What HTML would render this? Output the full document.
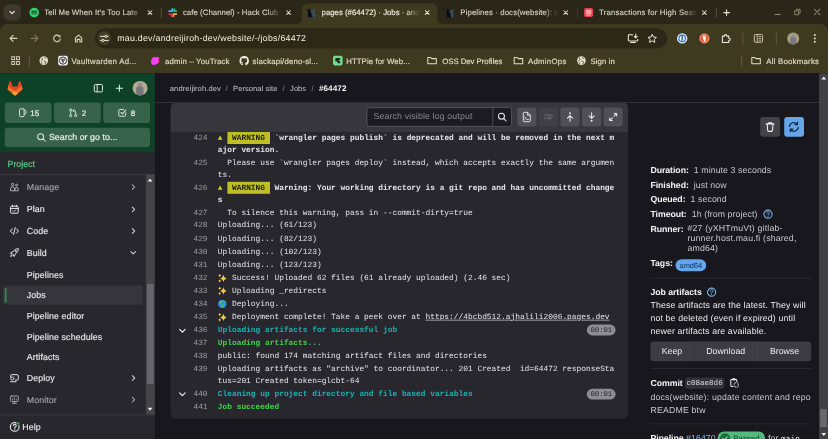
<!DOCTYPE html>
<html lang="en">
<head>
<meta charset="utf-8">
<title>pages (#64472) · Jobs</title>
<style>
html,body{margin:0;padding:0;background:#18171d;}
body{width:828px;height:439px;overflow:hidden;position:relative;}
#root{position:absolute;left:0;top:0;width:1380px;height:732px;transform:scale(.6);transform-origin:0 0;overflow:hidden;
  font-family:"Liberation Sans",sans-serif;color:#ececef;background:#18171d;text-rendering:geometricPrecision;}
#root *{box-sizing:border-box;}
.abs{position:absolute;}
svg{display:block;overflow:visible;}

/* ---------- browser chrome ---------- */
#tabstrip{position:absolute;left:0;top:0;width:1380px;height:60px;background:#2b2718;}
#toolbar{position:absolute;left:0;top:39.5px;width:1380px;height:50px;background:#3e3a20;border-radius:13px 13px 0 0;}
#bookmarks{position:absolute;left:0;top:85px;width:1380px;height:37px;background:#3e3a20;}
.tab{position:absolute;top:5.5px;height:34px;width:231.2px;}
.tab .fav{position:absolute;left:11px;top:7.6px;width:16px;height:16px;}
.tab .title{position:absolute;left:36px;top:6.6px;width:164px;height:18px;line-height:18px;font-size:13px;color:#d9d4c0;-webkit-text-stroke:.2px currentColor;white-space:nowrap;overflow:hidden;
  -webkit-mask-image:linear-gradient(90deg,#000 0,#000 140px,transparent 164px);mask-image:linear-gradient(90deg,#000 0,#000 140px,transparent 164px);}
.tab .x{position:absolute;left:205px;top:8.7px;width:14px;height:14px;}
.tab.active .bg{position:absolute;left:3px;top:0;width:225.6px;height:34px;background:#3e3a20;border-radius:9px 9px 0 0;}
.tab.active .title{color:#f3f0e4;}
.tab.active .bg:before,.tab.active .bg:after{content:"";position:absolute;bottom:0;width:8px;height:8px;}
.tab.active .bg:before{left:-8px;background:radial-gradient(circle at 0 0,transparent 7.7px,#3e3a20 8.3px);}
.tab.active .bg:after{right:-8px;background:radial-gradient(circle at 100% 0,transparent 7.7px,#3e3a20 8.3px);}
.tabsep{position:absolute;top:12px;width:1.6px;height:18px;background:#4d4833;border-radius:1px;}
.bk{position:absolute;top:7.9px;height:20px;line-height:20px;font-size:13px;color:#e4dfca;-webkit-text-stroke:.2px currentColor;white-space:nowrap;}
.bki{position:absolute;top:8.2px;width:16px;height:16px;}
.tsep{position:absolute;width:1.6px;background:#5b563a;border-radius:1px;}

/* ---------- page ---------- */
#page{position:absolute;left:0;top:122px;width:1380px;height:610px;background:#18171d;overflow:hidden;}
</style>
</head>
<body>
<div id="root">

<!-- ================= TAB STRIP ================= -->
<div id="tabstrip">
  <div class="abs" style="left:6.4px;top:6.5px;width:28.4px;height:27.5px;border-radius:9px;background:#3d3a2d;">
    <svg width="28.4" height="27.5" viewBox="0 0 28 28"><path d="M10.3 12.4 L14 16 L17.7 12.4" fill="none" stroke="#ece8d8" stroke-width="2" stroke-linecap="round" stroke-linejoin="round"/></svg>
  </div>

  <div class="tab" style="left:37.6px;">
    <svg class="fav" viewBox="0 0 16 16"><circle cx="8" cy="8" r="8" fill="#2fd566"/><rect x="3.2" y="4.6" width="9.6" height="6.6" rx="1.2" fill="#2f7d4a"/><rect x="3.6" y="5.4" width="8.8" height="1.3" fill="#1b5a33"/></svg>
    <div class="title"><span id="t1" style="letter-spacing:0.173px;">Tell Me When It’s Too Late</span></div>
    <svg class="x" viewBox="0 0 14 14"><path d="M3.9 3.9 L10.1 10.1 M10.1 3.9 L3.9 10.1" stroke="#e6e1cf" stroke-width="1.7" stroke-linecap="round"/></svg>
  </div>
  <div class="tabsep" style="left:268px;"></div>

  <div class="tab" style="left:268.8px;">
    <svg class="fav" viewBox="0 0 16 16">
      <rect x="5.6" y="0.6" width="3" height="6.4" rx="1.5" fill="#36c5f0"/><rect x="0.6" y="5.6" width="6.4" height="3" rx="1.5" transform="translate(0,-1.6)" fill="#36c5f0"/>
      <rect x="9" y="0.6" width="3" height="6.4" rx="1.5" transform="translate(0,0)" fill="#2eb67d"/><rect x="9" y="4" width="6.4" height="3" rx="1.5" fill="#2eb67d"/>
      <rect x="7.4" y="9" width="3" height="6.4" rx="1.5" transform="translate(0,0)" fill="#ecb22e"/><rect x="9" y="9" width="6.4" height="3" rx="1.5" fill="#ecb22e"/>
      <rect x="4" y="9" width="3" height="6.4" rx="1.5" transform="translate(0,0)" fill="#e01e5a"/><rect x="0.6" y="9" width="6.4" height="3" rx="1.5" fill="#e01e5a"/>
    </svg>
    <div class="title"><span id="t2" style="letter-spacing:0.085px;">cafe (Channel) - Hack Club</span></div>
    <svg class="x" viewBox="0 0 14 14"><path d="M3.9 3.9 L10.1 10.1 M10.1 3.9 L3.9 10.1" stroke="#e6e1cf" stroke-width="1.7" stroke-linecap="round"/></svg>
  </div>

  <div class="tab active" style="left:500px;"><div class="bg"></div>
    <svg class="fav" viewBox="0 0 16 16"><path d="M7.600 8C8.600 4 11.800 2.300 14.600 3.400C12.600 4.400 12 6 12.600 8C13.600 11 14 13 13 15.600L10.200 15.600C11.400 13 10 10 7.600 8Z" fill="#3b4358" stroke="#1f7f86" stroke-width=".7"/><path d="M.8 .6L3 3L5.400 1.400L6.600 6L10.200 15.600H2L2.400 8Z" fill="#0a0a12" stroke="#2a3042" stroke-width=".5"/></svg>
    <div class="title"><span id="t3" style="letter-spacing:-0.004px;">pages (#64472) · Jobs · andreijiroh</span></div>
    <svg class="x" viewBox="0 0 14 14"><path d="M3.9 3.9 L10.1 10.1 M10.1 3.9 L3.9 10.1" stroke="#f3f0e4" stroke-width="1.7" stroke-linecap="round"/></svg>
  </div>

  <div class="tab" style="left:731.2px;">
    <svg class="fav" viewBox="0 0 16 16"><path d="M7.600 8C8.600 4 11.800 2.300 14.600 3.400C12.600 4.400 12 6 12.600 8C13.600 11 14 13 13 15.600L10.200 15.600C11.400 13 10 10 7.600 8Z" fill="#3b4358" stroke="#1f7f86" stroke-width=".7"/><path d="M.8 .6L3 3L5.400 1.400L6.600 6L10.200 15.600H2L2.400 8Z" fill="#0a0a12" stroke="#2a3042" stroke-width=".5"/></svg>
    <div class="title"><span id="t4" style="letter-spacing:0.184px;">Pipelines · docs(website): update</span></div>
    <svg class="x" viewBox="0 0 14 14"><path d="M3.9 3.9 L10.1 10.1 M10.1 3.9 L3.9 10.1" stroke="#e6e1cf" stroke-width="1.7" stroke-linecap="round"/></svg>
  </div>
  <div class="tabsep" style="left:961.6px;"></div>

  <div class="tab" style="left:962.4px;">
    <svg class="fav" viewBox="0 0 16 16"><rect x="0.5" y="0.5" width="15" height="15" rx="3" fill="#e8434f"/><rect x="3.4" y="3.2" width="9.2" height="8" rx="1.6" fill="#f6a3a8"/><rect x="4.6" y="11.6" width="6.8" height="1.8" rx=".6" fill="#f6a3a8"/></svg>
    <div class="title"><span id="t5" style="letter-spacing:0.296px;">Transactions for High Seas</span></div>
    <svg class="x" viewBox="0 0 14 14"><path d="M3.9 3.9 L10.1 10.1 M10.1 3.9 L3.9 10.1" stroke="#e6e1cf" stroke-width="1.7" stroke-linecap="round"/></svg>
  </div>
  <div class="tabsep" style="left:1193px;"></div>

  <svg class="abs" style="left:1203px;top:12.5px;" width="16" height="16" viewBox="0 0 16 16"><path d="M8 3.4V12.600M3.400 8H12.600" stroke="#f0ecdc" stroke-width="1.800" stroke-linecap="round"/></svg>

  <!-- window controls -->
  <svg class="abs" style="left:1288px;top:12px;" width="16" height="16" viewBox="0 0 16 16"><path d="M3.5 12H12.5" stroke="#8f8a72" stroke-width="1.7" stroke-linecap="round"/></svg>
  <svg class="abs" style="left:1320.6px;top:12px;" width="16" height="16" viewBox="0 0 16 16"><path d="M3.5 6h6.500v6.500h-6.500z M6 5.800V3.500h6.500v6.500h-2.300" fill="none" stroke="#8f8a72" stroke-width="1.5" stroke-linejoin="round"/></svg>
  <svg class="abs" style="left:1353.7px;top:12px;" width="16" height="16" viewBox="0 0 16 16"><path d="M3.600 3.600 L12.400 12.400 M12.400 3.600 L3.600 12.400" stroke="#8f8a72" stroke-width="1.7" stroke-linecap="round"/></svg>
</div>

<!-- ================= TOOLBAR ================= -->
<div id="toolbar"><div class="abs" style="left:0;top:-1.5px;width:1380px;height:50px;">
  <!-- back -->
  <svg class="abs" style="left:13px;top:17px;" width="18" height="18" viewBox="0 0 18 18"><path d="M15 9H4M8.800 4L3.800 9l5 5" fill="none" stroke="#dad5c0" stroke-width="1.8" stroke-linecap="round" stroke-linejoin="round"/></svg>
  <!-- forward (disabled) -->
  <svg class="abs" style="left:49px;top:17px;" width="18" height="18" viewBox="0 0 18 18"><path d="M3 9H14M9.200 4L14.200 9l-5 5" fill="none" stroke="#857f5f" stroke-width="1.8" stroke-linecap="round" stroke-linejoin="round"/></svg>
  <!-- reload -->
  <svg class="abs" style="left:86px;top:17px;" width="18" height="18" viewBox="0 0 18 18"><path d="M14.400 9.600a5.500 5.500 0 1 1-1.600-4.500" fill="none" stroke="#dad5c0" stroke-width="1.800" stroke-linecap="round"/><path d="M14.800 2.800v4.200h-4.200z" fill="#dad5c0"/></svg>
  <!-- home -->
  <svg class="abs" style="left:122px;top:17px;" width="18" height="18" viewBox="0 0 18 18"><path d="M3.800 8.200L9 3.600l5.200 4.600v6.800H11.200v-4.400H6.800v4.400H3.800z" fill="none" stroke="#dad5c0" stroke-width="1.800" stroke-linejoin="round"/></svg>

  <!-- omnibox -->
  <div class="abs" style="left:157.5px;top:9px;width:954px;height:33.5px;border-radius:17px;background:#2c2817;"></div>
  <div class="abs" style="left:162.8px;top:14.4px;width:22.6px;height:22.6px;border-radius:12px;background:#433f26;"></div>
  <svg class="abs" style="left:166px;top:17.7px;" width="16" height="16" viewBox="0 0 16 16"><path d="M1.600 4.600H8.500M12.500 4.600H14.400M1.600 11.400H3.500M7.500 11.400H14.400" stroke="#f0ecdc" stroke-width="1.6" stroke-linecap="round"/><circle cx="10.500" cy="4.600" r="1.900" fill="none" stroke="#f0ecdc" stroke-width="1.500"/><circle cx="5.500" cy="11.400" r="1.900" fill="none" stroke="#f0ecdc" stroke-width="1.500"/></svg>
  <div class="abs" id="url" style="letter-spacing:0.466px;left:195.4px;top:10.6px;height:33.5px;line-height:33.5px;font-size:14.6px;color:#f3f0e4;white-space:nowrap;">mau.dev/andreijiroh-dev/website/-/jobs/64472</div>
  <!-- install -->
  <svg class="abs" style="left:1045px;top:17px;" width="20" height="18" viewBox="0 0 20 18"><path d="M9.500 3H3.200a1 1 0 0 0-1 1v8.200a1 1 0 0 0 1 1H16.800a1 1 0 0 0 1-1V10.500M6 16h8" fill="none" stroke="#f0ecdc" stroke-width="1.700" stroke-linecap="round" stroke-linejoin="round"/><path d="M14.500 1.800v6M11.800 5.400l2.700 2.700 2.700-2.700" fill="none" stroke="#f0ecdc" stroke-width="1.700" stroke-linecap="round" stroke-linejoin="round"/></svg>
  <!-- star -->
  <svg class="abs" style="left:1078px;top:17px;" width="18" height="18" viewBox="0 0 18 18"><path d="M9 2.200l2.100 4.500 4.900.6-3.600 3.400.9 4.900L9 13.200l-4.300 2.400.9-4.900L2 7.300l4.900-.6z" fill="none" stroke="#f0ecdc" stroke-width="1.600" stroke-linejoin="round"/></svg>

  <!-- 1password -->
  <svg class="abs" style="left:1128px;top:17px;" width="18" height="18" viewBox="0 0 18 18"><circle cx="9" cy="9" r="8.600" fill="#e9eef6"/><circle cx="9" cy="9" r="6.300" fill="#1a73e8"/><circle cx="9" cy="9" r="4.300" fill="#f4f7fb"/><rect x="7.900" y="5.200" width="2.200" height="7.600" rx=".9" fill="#1a4fa0"/></svg>
  <!-- duckduckgo -->
  <svg class="abs" style="left:1165px;top:17px;" width="18" height="18" viewBox="0 0 18 18"><circle cx="9" cy="9" r="8.600" fill="#e4572e"/><circle cx="9" cy="9" r="7.200" fill="none" stroke="#f7d9c9" stroke-width=".8"/><path d="M7 4c2.500-.8 4.600.8 4.600 3.400 0 2-.6 3.600-.2 6.600H8.200C8 11 6 9.600 6 7c0-1.200.3-2.300 1-3z" fill="#fbeee6"/><path d="M10.400 9.400l2.600-.6-.4 1.600-2.200.2z" fill="#f3b71b"/></svg>
  <!-- puzzle -->
  <svg class="abs" style="left:1201px;top:17px;" width="18" height="18" viewBox="0 0 18 18"><path d="M3 5.200h3.400v-.6a1.900 1.900 0 0 1 3.800 0v.6h3.400v3.400h.6a1.900 1.900 0 0 1 0 3.800h-.6v3.400H3z" fill="none" stroke="#f0ecdc" stroke-width="1.700" stroke-linejoin="round"/></svg>
  <div class="tsep" style="left:1237px;top:16px;height:20px;"></div>
  <!-- side panel / reading -->
  <svg class="abs" style="left:1255px;top:17px;" width="18" height="18" viewBox="0 0 18 18"><rect x="2.200" y="2.600" width="13.600" height="12.800" rx="1.600" fill="none" stroke="#cfcab3" stroke-width="1.600"/><path d="M7 2.600v12.800" stroke="#cfcab3" stroke-width="1.500"/><path d="M9.400 6h4M9.400 9h4M9.400 12h4" stroke="#cfcab3" stroke-width="1.400"/></svg>
  <div class="tsep" style="left:1293px;top:16px;height:20px;"></div>
  <!-- avatar -->
  <div class="abs" style="left:1311.600px;top:16px;width:20.400px;height:20.400px;border-radius:11px;background:#a89e82;overflow:hidden;">
    <div class="abs" style="left:7.400px;top:2.500px;width:5.600px;height:6px;border-radius:3px;background:#8a8a90;"></div>
    <div class="abs" style="left:5.400px;top:7.600px;width:9.600px;height:14px;border-radius:3px 3px 0 0;background:#767983;"></div>
  </div>
  <!-- menu -->
  <svg class="abs" style="left:1349px;top:17px;" width="18" height="18" viewBox="0 0 18 18"><circle cx="9" cy="3.400" r="1.600" fill="#f0ecdc"/><circle cx="9" cy="9" r="1.600" fill="#f0ecdc"/><circle cx="9" cy="14.600" r="1.600" fill="#f0ecdc"/></svg>
</div></div>

<!-- ================= BOOKMARKS BAR ================= -->
<div id="bookmarks">
  <svg class="bki" style="left:18px;" viewBox="0 0 16 16"><g fill="none" stroke="#d8d3bd" stroke-width="1.600"><rect x="1.600" y="1.600" width="4.800" height="4.800"/><rect x="9.600" y="1.600" width="4.800" height="4.800"/><rect x="1.600" y="9.600" width="4.800" height="4.800"/><rect x="9.600" y="9.600" width="4.800" height="4.800"/></g></svg>
  <div class="tsep" style="left:48px;top:8px;height:18px;width:1.500px;"></div>
  <svg class="bki" style="left:65px;" viewBox="0 0 16 16"><circle cx="8" cy="8" r="7.200" fill="#e4dfca"/><path d="M4 3.600c1.600.4 2.400 1.200 2 2.400s-2 1.200-2.400 2.600M9 2.400c.6 1.400 2.400 1 3 2.600M8 9c1.600-.6 3.200.2 3.400 1.800.2 1.200-1.200 2-1.600 3.200M3.400 10.200c1 .4 1.800 1.400 1.600 2.800" fill="none" stroke="#3e3a20" stroke-width="1.400"/></svg>
  <svg class="bki" style="left:97px;" viewBox="0 0 16 16"><rect x="0" y="0" width="16" height="16" rx="3" fill="#f4f4f6"/><circle cx="8" cy="8" r="6" fill="none" stroke="#1c1c22" stroke-width="1.500"/><path d="M4.600 5l3.400 6.400L11.400 5M6.600 5L8 8l1.400-3" fill="none" stroke="#1c1c22" stroke-width="1.300"/></svg>
  <div class="bk" id="b1" style="letter-spacing:0.457px;left:119px;">Vaultwarden Ad...</div>
  <svg class="bki" style="left:251px;" viewBox="0 0 16 16"><path d="M.6 9.600Q1 5 4.600 1.800Q7 .6 8.600 3.200Q11 .4 13 2.400Q16 5 13.600 7.600Q16 9.600 13 11.600Q9 15.800 4.600 15.400Q.4 14 .6 9.600Z" fill="#fb43ff"/><path d="M12.400 4.600Q15.400 5.200 13.600 7.600Q15.600 9.400 13.400 10.800Q11 9 12.400 4.600Z" fill="#ff3b6b"/></svg>
  <div class="bk" id="b2" style="letter-spacing:0.263px;left:275px;">admin – YouTrack</div>
  <svg class="bki" style="left:399px;" viewBox="0 0 16 16"><path d="M8 .4a7.800 7.800 0 0 0-2.500 15.200c.4.100.5-.2.500-.4v-1.400c-2.200.5-2.600-1-2.600-1-.4-.9-.9-1.100-.9-1.100-.7-.5.100-.5.100-.5.800.1 1.200.8 1.200.8.700 1.200 1.800.9 2.300.7.100-.5.300-.9.500-1.100-1.700-.2-3.500-.9-3.500-3.800 0-.8.300-1.500.8-2.100-.1-.2-.4-1 .1-2.100 0 0 .7-.2 2.100.8a7.300 7.300 0 0 1 3.900 0c1.500-1 2.100-.8 2.100-.8.400 1.100.2 1.900.1 2.100.5.600.8 1.300.8 2.100 0 3-1.800 3.600-3.500 3.800.3.200.5.700.5 1.400v2.200c0 .2.100.5.500.4A7.800 7.800 0 0 0 8 .4z" fill="#f3f0e4"/></svg>
  <div class="bk" id="b3" style="letter-spacing:0.276px;left:421px;">slackapi/deno-sl...</div>
  <svg class="bki" style="left:555px;" viewBox="0 0 16 16"><rect x="0" y="0" width="16" height="16" rx="3" fill="#73dc8c"/><path d="M4 3.600h8v3.200H9.600v2H12v3.600H7.400V9.600H4z" fill="#1d2a22"/></svg>
  <div class="bk" id="b4" style="letter-spacing:0.141px;left:577px;">HTTPie for Web...</div>
  <svg class="bki" style="left:712.200px;" viewBox="0 0 16 16"><path d="M1 2.800h5l1.700 1.900h7.500v8.700H1z" fill="none" stroke="#e4dfca" stroke-width="1.700" stroke-linejoin="round"/></svg>
  <div class="bk" id="b5" style="letter-spacing:-0.054px;left:737px;">OSS Dev Profiles</div>
  <svg class="bki" style="left:856.200px;" viewBox="0 0 16 16"><path d="M1 2.800h5l1.700 1.900h7.500v8.700H1z" fill="none" stroke="#e4dfca" stroke-width="1.700" stroke-linejoin="round"/></svg>
  <div class="bk" id="b6" style="letter-spacing:0.450px;left:880px;">AdminOps</div>
  <svg class="bki" style="left:961px;" viewBox="0 0 16 16"><circle cx="8" cy="8" r="7.200" fill="#e4dfca"/><path d="M4 3.600c1.600.4 2.400 1.200 2 2.400s-2 1.200-2.400 2.600M9 2.400c.6 1.400 2.400 1 3 2.600M8 9c1.600-.6 3.200.2 3.400 1.800.2 1.200-1.200 2-1.600 3.200M3.400 10.200c1 .4 1.800 1.400 1.600 2.800" fill="none" stroke="#3e3a20" stroke-width="1.400"/></svg>
  <div class="bk" id="b7" style="letter-spacing:0.179px;left:984px;">Sign in</div>
  <div class="tsep" style="left:1235px;top:8px;height:18px;width:1.500px;"></div>
  <svg class="bki" style="left:1252px;" viewBox="0 0 16 16"><path d="M1 2.800h5l1.700 1.900h7.500v8.700H1z" fill="none" stroke="#e4dfca" stroke-width="1.700" stroke-linejoin="round"/></svg>
  <div class="bk" id="b8" style="letter-spacing:0.402px;left:1277px;">All Bookmarks</div>
</div>

<!-- ================= PAGE ================= -->
<div id="page">
<!--PAGE-START-->
<style>
/* ---- left sidebar ---- */
#sb{position:absolute;left:0;top:0;width:257.500px;height:610px;background:#28272d;}
#sb .userbar{position:absolute;left:0;top:0;width:257.500px;height:131px;background:#0d4228;}
.cbtn{position:absolute;height:33px;border-radius:5px;background:#37624b;color:#e6efe8;font-size:13.4px;line-height:33px;-webkit-text-stroke:.35px #e6efe8;}
.nav{position:absolute;left:44.5px;margin-top:.8px;height:20px;line-height:20px;font-size:14.7px;letter-spacing:.2px;color:#ececef;white-space:nowrap;-webkit-text-stroke:.2px currentColor;}
.nav.dim{color:#a4a3a8;}
.nico{position:absolute;left:16px;width:16px;height:16px;}
.chev{position:absolute;left:215px;width:14px;height:14px;}
/* ---- main ---- */
#crumbs{position:absolute;left:257px;top:0;width:1108px;height:49px;border-bottom:1px solid #45444b;}
.cr{position:absolute;top:17.5px;height:16px;line-height:16px;font-size:12.6px;letter-spacing:.15px;color:#c5c4ca;white-space:nowrap;}
#log{position:absolute;left:284px;top:49px;width:762.500px;height:526.500px;background:#28272d;border-radius:9px;overflow:hidden;}
#logbar{position:absolute;left:0;top:0;width:100%;height:47.500px;background:#37363c;border-bottom:1px solid #434249;}
.lb{position:absolute;top:8px;width:32px;height:32px;border-radius:5px;background:#504f55;}
.lb svg{position:absolute;left:8px;top:8px;width:16px;height:16px;}
#lines{position:absolute;left:0;top:48.700px;width:100%;font-family:"Liberation Mono",monospace;font-size:13.12px;line-height:19.500px;color:#e6e5ea;}
.ln{position:relative;padding:1.130px 0 1.130px 79px;white-space:pre;min-height:21.760px;}
.ln .n{position:absolute;left:0;top:1.100px;width:62px;text-align:right;color:#a09fa6;}
.ln .tg{position:absolute;left:12px;top:3.500px;width:16px;height:16px;}
.ln .dur{position:absolute;left:694px;top:2.200px;height:18px;line-height:18px;padding:0 6.200px;border-radius:9px;background:#8d8c92;color:#2a292f;font-size:12px;}
.em{display:inline-block;position:relative;width:15.740px;height:19.500px;vertical-align:top;overflow:hidden;}
.em i{opacity:0;font-style:normal;}
.em svg{position:absolute;left:.3px;top:2.200px;width:15px;height:15px;}
.b{font-weight:700;}
.cy{color:#16b3b3;font-weight:700;}
.gr{color:#3fd34a;font-weight:700;}
.wb{background:#bfbf25;color:#1f1e10;font-weight:700;padding:2.5px 0;}
.wi{color:#cdcd2a;}
/* ---- right sidebar ---- */
.rl{position:absolute;left:1084px;height:20px;line-height:20px;font-size:14.600px;letter-spacing:.14px;white-space:nowrap;color:#c9c8ce;}
.rl b{color:#f4f4f6;font-weight:700;letter-spacing:-.1px;}
.hr{position:absolute;left:1084px;width:268px;height:1px;background:#35343a;}
.gb{position:absolute;top:447px;height:32.500px;line-height:34.300px;background:#3d3c43;color:#ececef;font-size:14.600px;text-align:center;}
</style>

<!-- ======== LEFT SIDEBAR ======== -->
<div id="sb">
  <div class="userbar"></div>
  <!-- gitlab logo -->
  <svg class="abs" style="left:11.500px;top:12.500px;" width="26" height="25" viewBox="0 0 26 25">
    <path d="M5 .5Q5.800 .5 6.200 1.600L8.800 9.600H17.200L19.800 1.600Q20.200 .5 21 .5Q21.800 .5 22.100 1.500L25.500 12Q26 13.600 24.800 14.600L13 24.700L1.200 14.600Q0 13.600 .5 12L3.900 1.500Q4.200 .5 5 .5Z" fill="#fc6d26"/>
    <path d="M5 .5Q5.800 .5 6.200 1.600L8.800 9.600H17.200L19.800 1.600Q20.200 .5 21 .5Q21.800 .5 22.100 1.500L24.300 8.300L13 16.600L1.700 8.300L3.900 1.500Q4.200 .5 5 .5Z" fill="#e24329"/>
    <path d="M13 24.700L7.600 20.100L13 17.200L18.400 20.100Z" fill="#fca326"/>
  </svg>
  <!-- collapse sidebar icon -->
  <svg class="abs" style="left:156px;top:17px;" width="16" height="16" viewBox="0 0 16 16"><rect x="1.200" y="1.800" width="13.600" height="12.400" rx="2" fill="none" stroke="#e8efe9" stroke-width="1.600"/><path d="M6 2v12" stroke="#e8efe9" stroke-width="1.600"/></svg>
  <!-- plus -->
  <svg class="abs" style="left:191px;top:17px;" width="16" height="16" viewBox="0 0 16 16"><path d="M8 2.800V13.200M2.800 8H13.200" stroke="#e8efe9" stroke-width="1.700" stroke-linecap="round"/></svg>
  <!-- avatar -->
  <div class="abs" style="left:221px;top:12.500px;width:24.500px;height:24.500px;border-radius:13px;background:#b3a98c;overflow:hidden;">
    <div class="abs" style="left:8.800px;top:3px;width:7px;height:7.500px;border-radius:3.500px;background:#8e8d92;"></div>
    <div class="abs" style="left:6.400px;top:9.400px;width:11.800px;height:16px;border-radius:3.500px 3.500px 0 0;background:#74767f;"></div>
  </div>
  <!-- counters -->
  <div class="cbtn" style="left:8px;top:49px;width:78px;height:34.300px;line-height:34.300px;">
    <svg class="abs" style="left:22px;top:9px;" width="16" height="16" viewBox="0 0 16 16"><path d="M2.600 2.600a1.200 1.200 0 0 1 1.200-1.200h6.400v11.200a1.800 1.800 0 0 1-1.800 1.800H4.400a1.800 1.800 0 0 1-1.800-1.800z" fill="none" stroke="#dfe9e2" stroke-width="1.600" stroke-linejoin="round"/><path d="M10.400 4.400h2.200a1 1 0 0 1 1 1l-.3 3.200c-.1.600-.5 1-1.100 1h-1.800" fill="none" stroke="#dfe9e2" stroke-width="1.500"/></svg>
    <span class="abs" style="left:42.500px;top:1.200px;">15</span>
  </div>
  <div class="cbtn" style="left:90px;top:49px;width:78px;height:34.300px;line-height:34.300px;">
    <svg class="abs" style="left:24px;top:9px;" width="16" height="16" viewBox="0 0 16 16"><circle cx="3.800" cy="3.200" r="1.800" fill="none" stroke="#dfe9e2" stroke-width="1.500"/><circle cx="3.800" cy="12.800" r="1.800" fill="none" stroke="#dfe9e2" stroke-width="1.500"/><circle cx="12.200" cy="12.800" r="1.800" fill="none" stroke="#dfe9e2" stroke-width="1.500"/><path d="M3.800 5v6M12.200 11V6.400a2 2 0 0 0-2-2H8M9.600 2.200L7.400 4.400l2.200 2.200" fill="none" stroke="#dfe9e2" stroke-width="1.500" stroke-linecap="round" stroke-linejoin="round"/></svg>
    <span class="abs" style="left:46.300px;top:1.200px;">2</span>
  </div>
  <div class="cbtn" style="left:172px;top:49px;width:78px;height:34.300px;line-height:34.300px;">
    <svg class="abs" style="left:24px;top:9px;" width="16" height="16" viewBox="0 0 16 16"><path d="M13.400 8.400v3.800a1.600 1.600 0 0 1-1.600 1.600H3.600A1.600 1.600 0 0 1 2 12.200V4a1.600 1.600 0 0 1 1.600-1.600h6.200" fill="none" stroke="#dfe9e2" stroke-width="1.600" stroke-linecap="round"/><path d="M5.600 7.400l2.400 2.400 5.600-6.200" fill="none" stroke="#dfe9e2" stroke-width="1.700" stroke-linecap="round" stroke-linejoin="round"/></svg>
    <span class="abs" style="left:45.800px;top:1.200px;">8</span>
  </div>
  <!-- search -->
  <div class="cbtn" style="left:8px;top:90.700px;width:242px;height:32.800px;line-height:32.800px;font-size:14.700px;">
    <svg class="abs" style="left:53px;top:8.400px;" width="16" height="16" viewBox="0 0 16 16"><circle cx="6.800" cy="6.800" r="5" fill="none" stroke="#dfe9e2" stroke-width="1.700"/><path d="M10.600 10.600l3.800 3.800" stroke="#dfe9e2" stroke-width="1.700" stroke-linecap="round"/></svg>
    <span class="abs" id="sgo" style="left:73.500px;top:1px;white-space:nowrap;letter-spacing:0.090px;">Search or go to...</span>
  </div>
  <!-- context header -->
  <div class="abs" id="proj" style="left:12.500px;top:142.500px;height:20px;line-height:20px;font-size:14.700px;font-weight:400;-webkit-text-stroke:.45px #52c27d;color:#52c27d;">Project</div>
  <div class="abs" style="left:0;top:167.700px;width:257.500px;height:1.600px;background:#48474d;"></div>

  <!-- nav scroll area -->
  <div class="abs" style="left:243px;top:169.300px;width:14.500px;height:399.700px;background:#454449;"></div>
  <div class="abs" style="left:245px;top:350.500px;width:10.500px;height:167.500px;background:#66656b;"></div>
  <svg class="abs" style="left:246px;top:175px;" width="8" height="6" viewBox="0 0 8 6"><path d="M0 5.500L4 .5l4 5z" fill="#f0f0f2"/></svg>
  <svg class="abs" style="left:246px;top:557px;" width="8" height="6" viewBox="0 0 8 6"><path d="M0 .5L4 5.500l4-5z" fill="#f0f0f2"/></svg>

  <!-- Manage -->
  <svg class="nico" style="top:181.500px;" viewBox="0 0 16 16"><g fill="none" stroke="#bdbcc2" stroke-width="1.500"><circle cx="5" cy="3.400" r="1.900"/><path d="M1.700 14v-3.400a3.300 3.300 0 0 1 6.600 0V14z" stroke-linejoin="round"/><circle cx="11.600" cy="4.600" r="1.600"/><path d="M8.800 14v-2.600a2.800 2.800 0 0 1 5.600 0V14z" stroke-linejoin="round"/></g></svg>
  <div class="nav dim" style="top:179.500px;">Manage</div>
  <svg class="chev" style="top:182.500px;" viewBox="0 0 14 14"><path d="M5.600 3.200L9.400 7 5.600 10.800" fill="none" stroke="#a4a3a8" stroke-width="1.800" stroke-linecap="round" stroke-linejoin="round"/></svg>
  <!-- Plan -->
  <svg class="nico" style="top:218.700px;" viewBox="0 0 16 16"><g fill="none" stroke="#ececef" stroke-width="1.600"><rect x="1.600" y="2.600" width="12.800" height="11.800" rx="2"/><path d="M1.600 6.400h12.800M4.800 1v2.600M11.200 1v2.600" stroke-linecap="round"/><path d="M5.600 10.200l1.600 1.600 3-3" stroke-linecap="round" stroke-linejoin="round" stroke-width="1.400"/></g></svg>
  <div class="nav" style="top:216.700px;">Plan</div>
  <svg class="chev" style="top:219.700px;" viewBox="0 0 14 14"><path d="M5.600 3.200L9.400 7 5.600 10.800" fill="none" stroke="#cfced4" stroke-width="1.800" stroke-linecap="round" stroke-linejoin="round"/></svg>
  <!-- Code -->
  <svg class="nico" style="top:254.900px;" viewBox="0 0 16 16"><g fill="none" stroke="#ececef" stroke-width="1.600" stroke-linecap="round" stroke-linejoin="round"><path d="M4.600 4.400L1.200 8l3.400 3.600M11.400 4.400L14.800 8l-3.400 3.600M9.400 2.400L6.600 13.600"/></g></svg>
  <div class="nav" style="top:252.900px;">Code</div>
  <svg class="chev" style="top:255.900px;" viewBox="0 0 14 14"><path d="M5.600 3.200L9.400 7 5.600 10.800" fill="none" stroke="#cfced4" stroke-width="1.800" stroke-linecap="round" stroke-linejoin="round"/></svg>
  <!-- Build -->
  <svg class="nico" style="top:291.100px;" viewBox="0 0 16 16"><g fill="none" stroke="#ececef" stroke-width="1.500" stroke-linejoin="round"><path d="M14.600 1.400c-3.800 0-6.600 1.600-8.600 5L3.200 7 1.600 9.200l3 .6 1.600 1.600.6 3 2.200-1.600.6-2.800c3.400-2 5-4.800 5-8.600z"/><circle cx="10.400" cy="5.600" r="1.200"/><path d="M3.600 11.200c-1 .4-1.800 1.600-2 3.200 1.600-.2 2.800-1 3.200-2"/></g></svg>
  <div class="nav" style="top:289.100px;">Build</div>
  <svg class="chev" style="top:292.100px;" viewBox="0 0 14 14"><path d="M3.200 5.400L7 9.200 10.800 5.400" fill="none" stroke="#cfced4" stroke-width="1.800" stroke-linecap="round" stroke-linejoin="round"/></svg>

  <div class="nav" style="top:325.800px;">Pipelines</div>
  <div class="abs" style="left:5px;top:353.500px;width:232.500px;height:32.500px;border-radius:5px;background:#36353c;"></div>
  <div class="abs" style="left:8px;top:358px;width:3px;height:24px;border-radius:2px;background:#2f8f52;"></div>
  <div class="nav" style="top:360px;">Jobs</div>
  <div class="nav" style="top:394.300px;">Pipeline editor</div>
  <div class="nav" style="top:429.300px;">Pipeline schedules</div>
  <div class="nav" style="top:463.500px;">Artifacts</div>
  <!-- Deploy -->
  <svg class="nico" style="top:499.700px;" viewBox="0 0 16 16"><g fill="none" stroke="#ececef" stroke-width="1.600" stroke-linecap="round" stroke-linejoin="round"><path d="M1.600 6.200V4.400a2 2 0 0 1 2-2h8.800a2 2 0 0 1 2 2v5.200a2 2 0 0 1-2 2H9.600M1.600 14.200h9"/><path d="M4.400 6.200a2.600 2.600 0 1 0 2.600 2.600M7.200 6l-1.400 1.400 1.400 1.400" stroke-width="1.400"/></g></svg>
  <div class="nav" style="top:498.500px;">Deploy</div>
  <svg class="chev" style="top:500.700px;" viewBox="0 0 14 14"><path d="M5.600 3.200L9.400 7 5.600 10.800" fill="none" stroke="#cfced4" stroke-width="1.800" stroke-linecap="round" stroke-linejoin="round"/></svg>
  <!-- Monitor -->
  <svg class="nico" style="top:536.300px;" viewBox="0 0 16 16"><g fill="none" stroke="#a4a3a8" stroke-width="1.600" stroke-linecap="round" stroke-linejoin="round"><rect x="1.400" y="2" width="13.200" height="9.200" rx="1.600"/><path d="M4.600 14.200h6.800M8 11.400v2.600"/><path d="M4.800 8.600V6.400M8 8.600V4.800M11.200 8.600V6.800" stroke-width="1.400"/></g></svg>
  <div class="nav dim" style="top:534.300px;">Monitor</div>
  <svg class="chev" style="top:537.300px;" viewBox="0 0 14 14"><path d="M5.600 3.200L9.400 7 5.600 10.800" fill="none" stroke="#a4a3a8" stroke-width="1.800" stroke-linecap="round" stroke-linejoin="round"/></svg>

  <!-- help -->
  <div class="abs" style="left:0;top:568.800px;width:257.500px;height:1.200px;background:#46454b;"></div>
  <svg class="abs" style="left:16px;top:581px;" width="17" height="17" viewBox="0 0 17 17"><circle cx="8.500" cy="8.500" r="7.300" fill="none" stroke="#ececef" stroke-width="1.800"/><path d="M6 6.400a2.500 2.500 0 1 1 3.700 2.200c-.8.500-1.200.9-1.200 1.800" fill="none" stroke="#ececef" stroke-width="1.800" stroke-linecap="round"/><circle cx="8.500" cy="12.600" r="1" fill="#ececef"/><circle cx="14.200" cy="3" r="2.600" fill="#3fb765" stroke="#28272d" stroke-width="1"/></svg>
  <div class="nav" style="left:37px;top:579.500px;">Help</div>
</div>

<!-- ======== BREADCRUMBS ======== -->
<div id="crumbs">
  <div class="cr" id="c1" style="letter-spacing:0.172px;left:26px;">andreijiroh.dev</div>
  <div class="cr" style="left:119px;color:#8a8990;">/</div>
  <div class="cr" id="c2" style="letter-spacing:0.091px;left:131.500px;">Personal site</div>
  <div class="cr" style="left:214px;color:#8a8990;">/</div>
  <div class="cr" id="c3" style="letter-spacing:0.023px;left:226.500px;">Jobs</div>
  <div class="cr" style="left:262px;color:#8a8990;">/</div>
  <div class="cr" id="c4" style="left:274.500px;color:#f4f4f6;font-weight:700;font-size:13.6px;letter-spacing:0.104px;">#64472</div>
</div>

<!-- ======== JOB LOG ======== -->
<div id="log">
  <div id="lines">
<div class="ln"><span class="n">424</span><span class="wi">▲</span> <span class="wb b"> WARNING </span> <span class="b">`wrangler pages publish` is deprecated and will be removed in the next m<br>ajor version.</span></div>
<div class="ln"><span class="n">425</span>  Please use `wrangler pages deploy` instead, which accepts exactly the same argumen<br>ts.</div>
<div class="ln"><span class="n">426</span><span class="wi">▲</span> <span class="wb b"> WARNING </span> <span class="b">Warning: Your working directory is a git repo and has uncommitted change<br>s</span></div>
<div class="ln"><span class="n">427</span>  To silence this warning, pass in --commit-dirty=true</div>
<div class="ln"><span class="n">428</span>Uploading... (61/123)</div>
<div class="ln"><span class="n">429</span>Uploading... (82/123)</div>
<div class="ln"><span class="n">430</span>Uploading... (102/123)</div>
<div class="ln"><span class="n">431</span>Uploading... (123/123)</div>
<div class="ln"><span class="n">432</span><span class="em"><i>✨</i><svg viewBox="0 0 16 16"><path d="M10 1.600Q10.900 7.600 16 8.500Q10.900 9.400 10 15.400Q9.100 9.400 4 8.500Q9.100 7.600 10 1.600Z" fill="#ffd53a"/><circle cx="10.400" cy="8.500" r="1.700" fill="#ffb637"/><path d="M3.600 .4Q4 3.100 6.600 3.500Q4 3.900 3.600 6.600Q3.200 3.900 .6 3.500Q3.200 3.100 3.600 .4Z" fill="#ffd53a"/><path d="M3.400 10.200Q3.800 12.600 6 13Q3.800 13.400 3.400 15.800Q3 13.400 .8 13Q3 12.600 3.400 10.200Z" fill="#ffd53a"/></svg></span> Success! Uploaded 62 files (61 already uploaded) (2.46 sec)</div>
<div class="ln"><span class="n">433</span><span class="em"><i>✨</i><svg viewBox="0 0 16 16"><path d="M10 1.600Q10.900 7.600 16 8.500Q10.900 9.400 10 15.400Q9.100 9.400 4 8.500Q9.100 7.600 10 1.600Z" fill="#ffd53a"/><circle cx="10.400" cy="8.500" r="1.700" fill="#ffb637"/><path d="M3.600 .4Q4 3.100 6.600 3.500Q4 3.900 3.600 6.600Q3.200 3.900 .6 3.500Q3.200 3.100 3.600 .4Z" fill="#ffd53a"/><path d="M3.400 10.200Q3.800 12.600 6 13Q3.800 13.400 3.400 15.800Q3 13.400 .8 13Q3 12.600 3.400 10.200Z" fill="#ffd53a"/></svg></span> Uploading _redirects</div>
<div class="ln"><span class="n">434</span><span class="em"><i>🌎</i><svg viewBox="0 0 16 16"><circle cx="8" cy="8" r="7.500" fill="#2b8ce6"/><path d="M3.200 3.200Q6.400 1 9.200 2.600Q9.600 4.600 7.600 5.400Q7.200 7.400 5.200 7.200Q3.600 8.600 2.400 6.800Q1.800 4.800 3.200 3.200Z" fill="#52c44e"/><path d="M6.600 8.800Q9.800 8 11 10.200Q10.400 13.200 8.600 14.800Q7 13.200 7.200 11.200Q6 10.200 6.600 8.800Z" fill="#52c44e"/><path d="M12 2.200Q14.600 4 15.200 6.600Q13.200 6.800 12.400 5Q11.200 3.600 12 2.200Z" fill="#52c44e"/></svg></span> Deploying...</div>
<div class="ln"><span class="n">435</span><span class="em"><i>✨</i><svg viewBox="0 0 16 16"><path d="M10 1.600Q10.900 7.600 16 8.500Q10.900 9.400 10 15.400Q9.100 9.400 4 8.500Q9.100 7.600 10 1.600Z" fill="#ffd53a"/><circle cx="10.400" cy="8.500" r="1.700" fill="#ffb637"/><path d="M3.600 .4Q4 3.100 6.600 3.500Q4 3.900 3.600 6.600Q3.200 3.900 .6 3.500Q3.200 3.100 3.600 .4Z" fill="#ffd53a"/><path d="M3.400 10.200Q3.800 12.600 6 13Q3.800 13.400 3.400 15.800Q3 13.400 .8 13Q3 12.600 3.400 10.200Z" fill="#ffd53a"/></svg></span> Deployment complete! Take a peek over at <u>https://4bcbd512.ajhalili2006.pages.dev</u></div>
<div class="ln"><svg class="tg" viewBox="0 0 16 16"><path d="M3.400 5.800L8 10.400l4.600-4.600" fill="none" stroke="#f0f0f2" stroke-width="1.900" stroke-linecap="round" stroke-linejoin="round"/></svg><span class="n">436</span><span class="cy">Uploading artifacts for successful job</span><span class="dur">00:01</span></div>
<div class="ln"><span class="n">437</span><span class="gr">Uploading artifacts...</span></div>
<div class="ln"><span class="n">438</span>public: found 174 matching artifact files and directories</div>
<div class="ln"><span class="n">439</span>Uploading artifacts as "archive" to coordinator... 201 Created  id=64472 responseSta<br>tus=201 Created token=glcbt-64</div>
<div class="ln"><svg class="tg" viewBox="0 0 16 16"><path d="M3.400 5.800L8 10.400l4.600-4.600" fill="none" stroke="#f0f0f2" stroke-width="1.900" stroke-linecap="round" stroke-linejoin="round"/></svg><span class="n">440</span><span class="cy">Cleaning up project directory and file based variables</span><span class="dur">00:01</span></div>
<div class="ln"><span class="n">441</span><span class="gr">Job succeeded</span></div>
  </div>
  <div id="logbar">
    <div class="abs" style="left:326.500px;top:8px;width:242px;height:32px;border:1px solid #6f6e75;border-radius:5px;background:#1c1b21;overflow:hidden;">
      <div class="abs" id="ph" style="letter-spacing:0.239px;left:11px;top:0;height:30px;line-height:30px;font-size:14.600px;color:#89888f;white-space:nowrap;">Search visible log output</div>
      <div class="abs" style="left:209.500px;top:0;width:31px;height:30px;border-left:1px solid #6f6e75;background:#1c1b21;"></div>
      <svg class="abs" style="left:217px;top:7px;" width="16" height="16" viewBox="0 0 16 16"><circle cx="6.800" cy="6.800" r="5" fill="none" stroke="#ececef" stroke-width="1.700"/><path d="M10.600 10.600l3.800 3.800" stroke="#ececef" stroke-width="1.700" stroke-linecap="round"/></svg>
    </div>
    <div class="lb" style="left:577.500px;"><svg viewBox="0 0 16 16"><path d="M2.200 1.800A1.600 1.600 0 0 1 3.800.2h5.400L13.800 4.800v9.400a1.600 1.600 0 0 1-1.600 1.600H3.800a1.600 1.600 0 0 1-1.600-1.600z" fill="none" stroke="#ececef" stroke-width="1.600" stroke-linejoin="round"/><path d="M9 .4V5h4.600" fill="none" stroke="#ececef" stroke-width="1.500"/><path d="M5 7.600l2 2-2 2M8.200 12.200h2.600" fill="none" stroke="#ececef" stroke-width="1.500" stroke-linecap="round" stroke-linejoin="round"/></svg></div>
    <div class="lb" style="left:613.700px;background:#403f45;"><svg viewBox="0 0 16 16"><path d="M1.600 4.600h10.200a2.600 2.600 0 0 1 0 5.200H7.600M9.600 7.600L7.400 9.800l2.200 2.200M1.600 9.800h3.200" fill="none" stroke="#7d7c83" stroke-width="1.500" stroke-linecap="round" stroke-linejoin="round"/></svg></div>
    <div class="lb" style="left:649.900px;"><svg viewBox="0 0 16 16"><circle cx="8" cy="1.800" r="1.600" fill="#ececef"/><path d="M8 15.200V5.800M3.800 10L8 5.800l4.200 4.200" fill="none" stroke="#ececef" stroke-width="1.800" stroke-linecap="round" stroke-linejoin="round"/></svg></div>
    <div class="lb" style="left:686.100px;"><svg viewBox="0 0 16 16"><circle cx="8" cy="14.200" r="1.600" fill="#ececef"/><path d="M8 .8v9.400M3.800 6L8 10.200 12.200 6" fill="none" stroke="#ececef" stroke-width="1.800" stroke-linecap="round" stroke-linejoin="round"/></svg></div>
    <div class="lb" style="left:722.300px;"><svg viewBox="0 0 16 16"><path d="M9.600 2.200h4.200v4.200M13.600 2.400L9.400 6.600M6.400 13.800H2.200V9.600M2.400 13.600l4.200-4.200" fill="none" stroke="#ececef" stroke-width="1.700" stroke-linecap="round" stroke-linejoin="round"/></svg></div>
  </div>
</div>

<!-- ======== RIGHT SIDEBAR ======== -->
<div class="abs" style="left:1267px;top:73px;width:32.500px;height:32.500px;border-radius:5px;background:#434248;">
  <svg class="abs" style="left:6.800px;top:6.600px;" width="19" height="19" viewBox="0 0 16 16"><path d="M2.600 3.800h10.800M6 3.600V2.200h4v1.400M4 4l.6 9a1.400 1.400 0 0 0 1.400 1.300h4a1.400 1.400 0 0 0 1.400-1.300L12 4" fill="none" stroke="#f0f0f2" stroke-width="1.500" stroke-linecap="round" stroke-linejoin="round"/></svg>
</div>
<div class="abs" style="left:1307px;top:73px;width:33px;height:32.500px;border-radius:5px;background:#63a7ea;">
  <svg class="abs" style="left:6.400px;top:6.600px;" width="20.200" height="19" viewBox="0 0 17 16"><path d="M2.400 7.200a6 6 0 0 1 10.600-3M14.600 8.800a6 6 0 0 1-10.600 3" fill="none" stroke="#12233a" stroke-width="1.700" stroke-linecap="round"/><path d="M13.600 1.200v3.600H10M3.400 14.800v-3.600H7" fill="none" stroke="#12233a" stroke-width="1.700" stroke-linecap="round" stroke-linejoin="round"/></svg>
</div>

<div class="rl" id="r1" style="top:152.300px;"><b>Duration:</b>&nbsp; 1 minute 3 seconds</div>
<div class="rl" id="r2" style="top:177.200px;"><b>Finished:</b>&nbsp; just now</div>
<div class="rl" id="r3" style="top:200.100px;"><b>Queued:</b>&nbsp; 1 second</div>
<div class="rl" id="r4" style="top:224.600px;"><b>Timeout:</b>&nbsp; 1h (from project)</div>
<svg class="abs" style="left:1271.500px;top:226.600px;" width="16" height="16" viewBox="0 0 16 16"><circle cx="8" cy="8" r="6.800" fill="none" stroke="#7fb6f0" stroke-width="1.700"/><path d="M6 6.200a2.100 2.100 0 1 1 3.100 1.800c-.7.400-1.100.8-1.100 1.600" fill="none" stroke="#7fb6f0" stroke-width="1.500" stroke-linecap="round"/><circle cx="8" cy="11.700" r=".9" fill="#7fb6f0"/></svg>
<div class="rl" id="r5" style="top:249.500px;"><b>Runner:</b></div>
<div class="rl" id="r5a" style="left:1145.800px;top:251px;letter-spacing:.27px;line-height:16.500px;height:auto;">#27 (yXHTmuVt) gitlab-<br>runner.host.mau.fi (shared,<br>amd64)</div>
<div class="rl" id="r6" style="top:308px;"><b>Tags:</b></div>
<div class="abs" id="tag" style="left:1126px;top:310px;width:51px;height:19.500px;line-height:21.500px;border-radius:10px;background:#63a7ea;color:#0b2d5c;font-size:12.300px;text-align:center;">amd64</div>
<div class="hr" style="top:341px;"></div>

<div class="rl" id="r7" style="top:354.500px;"><b>Job artifacts</b></div>
<svg class="abs" style="left:1178px;top:356.500px;" width="16" height="16" viewBox="0 0 16 16"><circle cx="8" cy="8" r="6.800" fill="none" stroke="#7fb6f0" stroke-width="1.700"/><path d="M6 6.200a2.100 2.100 0 1 1 3.100 1.800c-.7.400-1.100.8-1.100 1.600" fill="none" stroke="#7fb6f0" stroke-width="1.500" stroke-linecap="round"/><circle cx="8" cy="11.700" r=".9" fill="#7fb6f0"/></svg>
<div class="rl" id="r8" style="letter-spacing:.25px;top:377px;line-height:21.500px;height:auto;color:#ececef;">These artifacts are the latest. They will<br>not be deleted (even if expired) until<br>newer artifacts are available.</div>
<div class="gb" style="left:1084px;width:73px;border-radius:5px 0 0 5px;border-right:1px solid #55545b;">Keep</div>
<div class="gb" style="left:1157px;width:106px;border-right:1px solid #55545b;">Download</div>
<div class="gb" style="left:1263px;width:89px;border-radius:0 5px 5px 0;">Browse</div>
<div class="hr" style="top:491.500px;"></div>

<div class="rl" id="r9" style="top:507px;"><b>Commit</b></div>
<div class="abs" id="sha" style="left:1141.500px;top:506.500px;width:65.500px;height:19px;line-height:20.500px;border-radius:4px;background:#333238;color:#dddce1;font-family:'Liberation Mono',monospace;font-size:12.600px;text-align:center;">c08ae8d6</div>
<svg class="abs" style="left:1215.500px;top:507.500px;" width="16" height="16" viewBox="0 0 16 16"><path d="M4.600 2.400H3.400A1.400 1.400 0 0 0 2 3.800v8.800A1.400 1.400 0 0 0 3.400 14H5.600M9.400 2.400h1.200A1.400 1.400 0 0 1 12 3.800V6" fill="none" stroke="#f0f0f2" stroke-width="1.700" stroke-linecap="round"/><rect x="4.400" y=".6" width="5.200" height="3.400" rx="1" fill="#f0f0f2"/><rect x="7.600" y="8" width="6.800" height="7.200" rx="1" fill="none" stroke="#f0f0f2" stroke-width="1.600" stroke-dasharray="2.400 1.300"/></svg>
<div class="rl" id="r10" style="letter-spacing:.29px;top:530.500px;line-height:21.200px;height:auto;">docs(website): update content and repo<br>README btw</div>
<div class="hr" style="top:584.300px;"></div>
<div class="rl" id="r11" style="top:598.700px;"><b>Pipeline</b> <span style="color:#7fb6f0;">#16470</span></div>
<div class="abs" style="left:1196px;top:597px;width:79px;height:22px;border-radius:11px;background:#55b87c;"></div>
<div class="abs" style="left:1199.500px;top:599.500px;width:17px;height:17px;border-radius:9px;background:#1f6e41;"></div>
<svg class="abs" style="left:1199.500px;top:599.500px;" width="17" height="17" viewBox="0 0 17 17"><path d="M5 8.800l2.400 2.400 4.600-5" fill="none" stroke="#8fdcae" stroke-width="1.800" stroke-linecap="round" stroke-linejoin="round"/></svg>
<div class="abs" style="left:1222px;top:598.600px;height:20px;line-height:20px;font-size:13.2px;color:#134a2a;">Passed</div>
<div class="rl" style="left:1280px;top:598.700px;">for <span style="font-family:'Liberation Mono',monospace;font-size:13px;color:#ececef;">main</span></div>

<!-- page scrollbar -->
<div class="abs" style="left:1365px;top:0;width:15px;height:610px;background:#414045;"></div>
<div class="abs" style="left:1366.700px;top:559.700px;width:11.700px;height:30.500px;background:#69686d;"></div>
<svg class="abs" style="left:1368.500px;top:5px;" width="8" height="6" viewBox="0 0 8 6"><path d="M0 5.500L4 .5l4 5z" fill="#f0f0f2"/></svg>
<svg class="abs" style="left:1368.500px;top:599px;" width="8" height="6" viewBox="0 0 8 6"><path d="M0 .5L4 5.500l4-5z" fill="#f0f0f2"/></svg>

<!--PAGE-END-->
</div>

</div>
</body>
</html>
